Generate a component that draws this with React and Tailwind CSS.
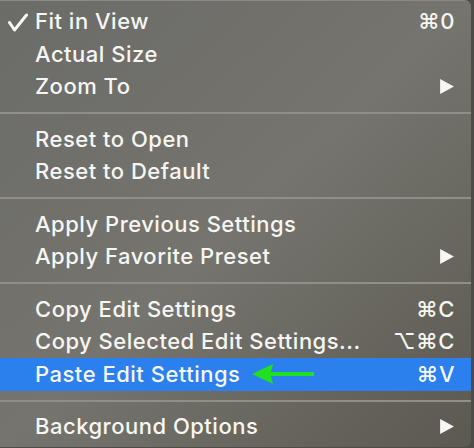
import React from "react"

const font = { fontFamily: "Inter, 'Noto Sans', 'DejaVu Sans', sans-serif" }

function Check() {
  return (
    <svg width="22" height="20" viewBox="0 0 22 20" className="absolute left-[7px] top-[7px]">
      <path d="M2.5 9.5 L7.5 17 L19.5 2" fill="none" stroke="#f7f7f5" strokeWidth="3" strokeLinecap="round" strokeLinejoin="round" />
    </svg>
  )
}

function Triangle() {
  return (
    <svg width="17" height="17" viewBox="0 0 16 16">
      <path d="M2 1 L15 8 L2 15 Z" fill="#f7f7f5" />
    </svg>
  )
}

function GreenArrow() {
  return (
    <svg width="66" height="24" viewBox="0 0 66 24" className="ml-[11px]">
      <path d="M1 12 L22 2 L20 10 L63 10 L63 14 L20 14 L22 22 Z" fill="#1fe021" strokeLinejoin="round" />
    </svg>
  )
}

function Row({ label, shortcut, submenu, checked, active, children }) {
  return (
    <div
      className={`relative flex items-center h-[32.5px] pl-[35px] pr-[16px] ${active ? "bg-[#2b80ee]" : ""}`}
    >
      {checked && <Check />}
      <span className="text-[22px] font-medium text-[#f6f6f3] tracking-[0.5px] whitespace-nowrap">{label}</span>
      {children}
      <div className="ml-auto flex items-center text-[22px] font-medium text-[#f6f6f3] tracking-[0.5px]">
        {shortcut && <span>{shortcut}</span>}
        {submenu && <Triangle />}
      </div>
    </div>
  )
}

function Separator() {
  return (
    <div className="h-[20px] flex items-center">
      <div className="h-[2px] w-full bg-[#8f8e88]" />
    </div>
  )
}

export default function App() {
  return (
    <div className="w-[474px] h-[448px] bg-[#4d4c48] overflow-hidden" style={font}>
      <div className="w-[471px] h-[447px] rounded-r-[7px] border-t border-[#8a8985] pt-[4.5px] bg-gradient-to-br from-[#6b6b68] via-[#75746e] to-[#5b5951]">
        <Row label="Fit in View" shortcut="⌘0" checked />
        <Row label="Actual Size" />
        <Row label="Zoom To" submenu />
        <Separator />
        <Row label="Reset to Open" />
        <Row label="Reset to Default" />
        <Separator />
        <Row label="Apply Previous Settings" />
        <Row label="Apply Favorite Preset" submenu />
        <Separator />
        <Row label="Copy Edit Settings" shortcut="⌘C" />
        <Row label="Copy Selected Edit Settings..." shortcut="⌥⌘C" />
        <Row label="Paste Edit Settings" shortcut="⌘V" active>
          <GreenArrow />
        </Row>
        <Separator />
        <Row label="Background Options" submenu />
      </div>
    </div>
  )
}
